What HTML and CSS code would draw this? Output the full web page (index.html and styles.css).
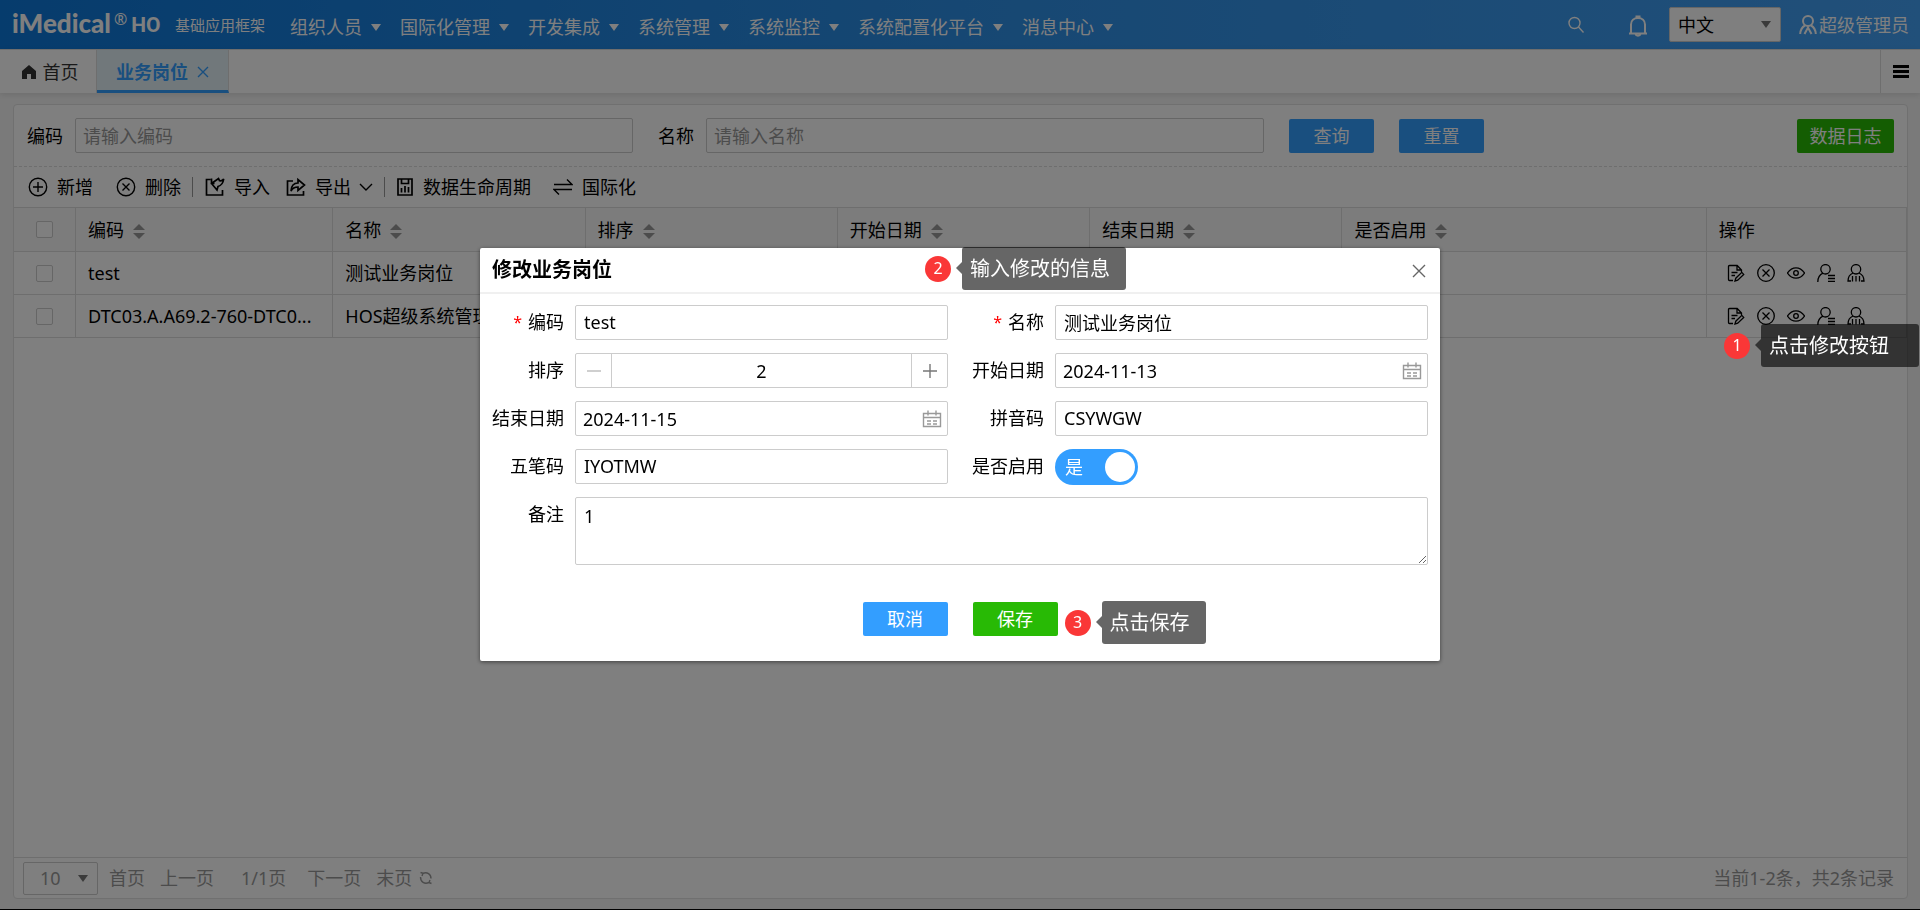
FILE: index.html
```html
<!DOCTYPE html>
<html lang="zh-CN">
<head>
<meta charset="utf-8">
<title>业务岗位</title>
<link rel="stylesheet" href="styles.css">
</head>
<body>
<svg class="sprite" aria-hidden="true">
  <symbol id="i-edit" viewBox="0 0 18 18"><path d="M6 16.500H2.500a1 1 0 0 1-1-1v-13a1 1 0 0 1 1-1h7.700L14.500 6v2M10 1.500V6h4.500M4.500 8.500h6M4.500 11.500h3.500M8 17l.8-2.800 6-5.800 1.900 2-6 5.700z"/></symbol>
  <symbol id="i-del" viewBox="0 0 18 18"><circle cx="9" cy="9" r="8.300"/><path d="M5.500 5.500l7 7M12.500 5.500l-7 7"/></symbol>
  <symbol id="i-eye" viewBox="0 0 18 18"><path d="M.5 9C3 5.300 5.800 3.800 9 3.800s6 1.500 8.500 5.200C15 12.700 12.200 14.200 9 14.200S3 12.700.5 9z"/><circle cx="9" cy="9" r="2.300"/></symbol>
  <symbol id="i-userlist" viewBox="0 0 18 18"><circle cx="8.500" cy="5.300" r="4.700"/><path d="M.8 18c0-4.800 2-7.500 5.200-8.900M11 11.500h7.500M11 14.500h7.500M11 17.500h7.500"/></symbol>
  <symbol id="i-usergroup" viewBox="0 0 18 18"><circle cx="9" cy="5.300" r="4.700"/><path d="M6 9C2.500 10.500 1 13 1 17h3M12 9c3.500 1.500 5 4 5 8h-3M5.500 12v5.500M9 12v5.500M12.500 12v5.500"/></symbol>
  <symbol id="i-calendar" viewBox="0 0 20 18"><path d="M1.500 3.500h17v13h-17zM1.500 7.500h17M6 .5v5M14 .5v5M5 11h4M11 11h4M5 14h4M11 14h4"/></symbol>
</svg>

<div class="page">
  <header class="topbar">
    <div class="logo"><b class="logo-name">iMedical</b><span class="logo-reg">®</span><b class="logo-ho">HO</b></div>
    <span class="product">基础应用框架</span>
    <nav class="menu">
      <a href="#">组织人员<i class="caret"></i></a>
      <a href="#">国际化管理<i class="caret"></i></a>
      <a href="#">开发集成<i class="caret"></i></a>
      <a href="#">系统管理<i class="caret"></i></a>
      <a href="#">系统监控<i class="caret"></i></a>
      <a href="#">系统配置化平台<i class="caret"></i></a>
      <a href="#">消息中心<i class="caret"></i></a>
    </nav>
    <div class="tools">
      <button class="plain" aria-label="搜索"><svg class="ico" width="18" height="18" viewBox="0 0 18 18"><circle cx="7.500" cy="7" r="5.500"/><path d="M11.500 11l5 5.500"/></svg></button>
      <button class="plain bell" aria-label="通知"><svg class="ico thick" width="20" height="22" viewBox="0 0 20 22"><path d="M1 18.500h18M3 18V9.500C3 5.500 6 3 10 3s7 2.500 7 6.500V18M8.500 3V1.500h3V3M7.500 19c.5 2.200 4.500 2.200 5 0"/></svg></button>
      <div class="select-box lang"><select aria-label="语言"><option>中文</option></select></div>
      <a class="user" href="#"><svg class="ico thick" width="18" height="20" viewBox="0 0 18 20"><circle cx="9" cy="6" r="5"/><path d="M6 10.500C3 12 1.500 15 1.200 19M12 10.500c3 1.500 4.500 4.500 4.800 8.500M5.500 19L9 12.500l3.500 6.500"/></svg>超级管理员</a>
    </div>
  </header>

  <div class="tabs">
    <button class="tab home"><svg width="14" height="14" viewBox="0 0 14 14"><path fill="currentColor" d="M7 0l7 6v8H9V9H5v5H0V6z"/></svg>首页</button>
    <button class="tab active">业务岗位<svg class="ico" width="12" height="12" viewBox="0 0 12 12"><path d="M1 1l10 10M11 1L1 11"/></svg></button>
    <button class="tab-menu" aria-label="标签菜单"><i></i><i></i><i></i></button>
  </div>

  <main class="panel">
    <form class="search">
      <label for="q-code">编码</label><input class="field" id="q-code" placeholder="请输入编码">
      <label for="q-name">名称</label><input class="field" id="q-name" placeholder="请输入名称">
      <button type="button" class="btn blue">查询</button>
      <button type="button" class="btn blue">重置</button>
      <button type="button" class="btn green log">数据日志</button>
    </form>

    <div class="toolbar">
      <button class="tool"><svg class="ico" width="20" height="20" viewBox="0 0 20 20"><circle cx="10" cy="10" r="8.700"/><path d="M10 5v10M5 10h10"/></svg>新增</button>
      <button class="tool"><svg class="ico" width="20" height="20" viewBox="0 0 20 20"><circle cx="10" cy="10" r="8.700"/><path d="M6.500 6.500l7 7M13.500 6.500l-7 7"/></svg>删除</button>
      <span class="bar"></span>
      <button class="tool"><svg class="ico import" width="20" height="20" viewBox="0 0 20 20"><path d="M5.500 2.500H1.500v15.500h16v-5M18.700 2c-1 1.500-2.700 2-4.200 1.700L13.500 1.500 6.500 6.500l5.500 6.500 1-3.500c3.500-1 5.200-4 5.700-7.500zM6.500 1.500v5h3"/></svg>导入</button>
      <button class="tool"><svg class="ico import" width="20" height="20" viewBox="0 0 20 20"><path d="M7 4H1.500v14h16v-4M5 14c.3-5 2.500-8 7-8V2.500l6.500 5.500-6.500 5.500V10c-3.500 0-5.500 1-7 4z"/></svg>导出<svg class="ico chev" width="14" height="8" viewBox="0 0 14 8"><path d="M1 1l6 6 6-6"/></svg></button>
      <span class="bar"></span>
      <button class="tool"><svg class="ico import" width="16" height="18" viewBox="0 0 16 18"><path d="M1 1h14v16H1zM4.500 1v4.500h7V1M4.500 14.500V10M8 14.500V8M11.500 14.500V9"/></svg>数据生命周期</button>
      <button class="tool wide"><svg class="ico" width="20" height="20" viewBox="0 0 20 20"><path d="M1 7.500h18l-5-5M19 12.500H1l5 5"/></svg>国际化</button>
    </div>

    <table class="grid">
      <colgroup><col class="c-check"><col class="c-code"><col class="c-std"><col class="c-std"><col class="c-std"><col class="c-std"><col class="c-flag"><col class="c-act"></colgroup>
      <thead>
        <tr><th><input type="checkbox" aria-label="全选"></th><th>编码<i class="sort"></i></th><th>名称<i class="sort"></i></th><th>排序<i class="sort"></i></th><th>开始日期<i class="sort"></i></th><th>结束日期<i class="sort"></i></th><th>是否启用<i class="sort"></i></th><th>操作</th></tr>
      </thead>
      <tbody>
        <tr><td><input type="checkbox" aria-label="选择 test"></td><td>test</td><td>测试业务岗位</td><td></td><td></td><td></td><td></td>
          <td><div class="acts">
            <button aria-label="修改"><svg class="ico"><use href="#i-edit"/></svg></button><button aria-label="删除"><svg class="ico"><use href="#i-del"/></svg></button><button aria-label="查看"><svg class="ico"><use href="#i-eye"/></svg></button><button aria-label="用户列表"><svg class="ico"><use href="#i-userlist"/></svg></button><button aria-label="用户组"><svg class="ico"><use href="#i-usergroup"/></svg></button>
          </div></td></tr>
        <tr><td><input type="checkbox" aria-label="选择 DTC03"></td><td>DTC03.A.A69.2-760-DTC0...</td><td>HOS超级系统管理</td><td></td><td></td><td></td><td></td>
          <td><div class="acts">
            <button aria-label="修改"><svg class="ico"><use href="#i-edit"/></svg></button><button aria-label="删除"><svg class="ico"><use href="#i-del"/></svg></button><button aria-label="查看"><svg class="ico"><use href="#i-eye"/></svg></button><button aria-label="用户列表"><svg class="ico"><use href="#i-userlist"/></svg></button><button aria-label="用户组"><svg class="ico"><use href="#i-usergroup"/></svg></button>
          </div></td></tr>
      </tbody>
    </table>

    <footer class="pager">
      <div class="select-box size"><select aria-label="每页条数"><option>10</option></select></div>
      <a href="#">首页</a><a href="#">上一页</a><span class="count">1/1页</span><a href="#">下一页</a><a href="#" class="last">末页</a>
      <button class="plain refresh" aria-label="刷新"><svg class="ico" width="14" height="14" viewBox="0 0 14 14"><path d="M4 2.300C8 .5 12 3 12 7.500M1.500 6C1.500 11 5.500 13.500 10 11.500M1.500 1.500L4 2.300 3 5M12.500 12.500L10 11.500l1-2.500"/></svg></button>
      <span class="total">当前1-2条，共2条记录</span>
    </footer>
  </main>
</div>

<div class="overlay">
  <section class="dialog" role="dialog" aria-labelledby="dlg-title">
    <header class="dialog-head">
      <h2 id="dlg-title">修改业务岗位</h2>
      <button class="plain close" aria-label="关闭"><svg class="ico" width="14" height="14" viewBox="0 0 14 14"><path d="M1 1l12 12M13 1L1 13"/></svg></button>
      <div class="step step-info"><span class="num">2</span><span class="tip">输入修改的信息</span></div>
    </header>
    <form class="form">
      <div class="item"><label for="f-code"><em>*</em>编码</label><input class="field" id="f-code" value="test"></div>
      <div class="item"><label for="f-name"><em>*</em>名称</label><input class="field" id="f-name" value="测试业务岗位"></div>
      <div class="item"><label for="f-sort">排序</label>
        <div class="field spinner"><button type="button" aria-label="减少"><svg class="ico" width="14" height="14" viewBox="0 0 14 14"><path d="M0 7h14"/></svg></button><input id="f-sort" value="2"><button type="button" class="plus" aria-label="增加"><svg class="ico" width="14" height="14" viewBox="0 0 14 14"><path d="M0 7h14M7 0v14"/></svg></button></div></div>
      <div class="item"><label for="f-start">开始日期</label><div class="field date"><input id="f-start" value="2024-11-13"><svg class="ico" width="20" height="18"><use href="#i-calendar"/></svg></div></div>
      <div class="item"><label for="f-end">结束日期</label><div class="field date"><input id="f-end" value="2024-11-15"><svg class="ico" width="20" height="18"><use href="#i-calendar"/></svg></div></div>
      <div class="item"><label for="f-py">拼音码</label><input class="field" id="f-py" value="CSYWGW"></div>
      <div class="item"><label for="f-wb">五笔码</label><input class="field" id="f-wb" value="IYOTMW"></div>
      <div class="item"><label for="f-on">是否启用</label><div class="switch"><input type="checkbox" id="f-on" checked><span>是</span></div></div>
      <div class="item full"><label for="f-note">备注</label><textarea class="field" id="f-note">1</textarea></div>
    </form>
    <footer class="dialog-foot">
      <button class="btn blue">取消</button>
      <div class="save"><button class="btn green">保存</button>
        <div class="step step-save"><span class="num">3</span><span class="tip">点击保存</span></div></div>
    </footer>
  </section>
  <div class="step step-edit"><span class="num">1</span><span class="tip">点击修改按钮</span></div>
</div>
</body>
</html>
```
FILE: styles.css
```css
* { box-sizing: border-box; }
body {
  margin: 0;
  color: #000;
  font: 18px/24px "Noto Sans", "Noto Sans CJK SC", sans-serif;
}
button, input, select, textarea { font: inherit; color: inherit; margin: 0; }
button { padding: 0; border: 0; background: none; }
a { color: inherit; text-decoration: none; }
.sprite { display: none; }
.ico { fill: none; stroke: currentColor; stroke-width: 1.4; flex: none; }
.ico.import { stroke-width: 1.7; }
.ico.thick { stroke-width: 2; }
.plain { display: flex; }

.page {
  display: flex;
  flex-direction: column;
  min-height: 100vh;
  background: #f5f5f5;
  border-bottom: 1px solid #000;
}

/* top bar */
.topbar {
  display: flex;
  align-items: center;
  height: 49px;
  padding: 0 11px 0 12px;
  color: #fff;
  background: linear-gradient(90deg, #0d78da 0%, #2d8fe6 50%, #43a0f4 100%);
}
.logo { display: flex; align-items: center; width: 163px; height: 32px; margin-top: -4px; }
.logo-name { font: 900 26px/32px Lato, sans-serif; }
.logo-reg { margin: -8px 4px 0 3px; font-size: 16px; }
.logo-ho { padding-top: 5px; font: 700 21px/28px Roboto, sans-serif; }
.product { font-size: 15px; }
.menu { display: flex; padding: 5px 0 0 25px; }
.menu a { display: flex; align-items: center; margin-right: 19px; white-space: nowrap; }
.caret { margin-left: 9px; border: 5px solid transparent; border-top: 7px solid; border-bottom: 0; }
.tools { display: flex; align-items: center; margin-left: auto; }
.bell { margin: 3px 21px 0 43px; }
.select-box { position: relative; border: 1px solid #ccc; border-radius: 2px; background: #fff; }
.select-box::after {
  content: "";
  position: absolute;
  top: 13px;
  right: 9px;
  border: 5px solid transparent;
  border-top: 7px solid #777;
  border-bottom: 0;
  pointer-events: none;
}
.select-box select { width: 100%; height: 100%; padding: 0 8px; border: 0; background: none; appearance: none; }
.lang { width: 112px; height: 35px; color: #000; }
.user { display: flex; align-items: center; gap: 2px; margin-left: 18px; }

/* tabs */
.tabs {
  display: flex;
  height: 44px;
  background: #fff;
  border-top: 1px solid #ddd;
  box-shadow: 0 2px 6px rgba(0, 0, 0, .1);
}
.tab { display: flex; align-items: center; justify-content: center; }
.home { gap: 7px; width: 97px; padding-left: 4px; color: #333; border-right: 1px solid #ddd; }
.tab.active {
  gap: 9px;
  width: 132px;
  padding-top: 3px;
  color: #339eff;
  font-weight: 700;
  background: #e3f1f6;
  border-right: 1px solid #ddd;
  border-bottom: 3px solid #339eff;
}
.tab-menu {
  display: flex;
  flex-direction: column;
  align-items: center;
  justify-content: center;
  gap: 2px;
  width: 40px;
  margin-left: auto;
  border-left: 1px solid #ddd;
}
.tab-menu i { width: 16px; height: 3px; background: #000; }

/* panel */
.panel {
  display: flex;
  flex: 1;
  flex-direction: column;
  margin: 11px 12px 10px 13px;
  background: #fff;
  border: 1px solid #e0e0e0;
  border-radius: 4px;
}
.search {
  display: flex;
  align-items: center;
  height: 62px;
  padding: 0 13px;
  border-bottom: 1px dashed #ddd;
}
.search label { margin-right: 12px; white-space: nowrap; }
.field {
  height: 35px;
  padding: 0 8px;
  background: #fff;
  border: 1px solid #ccc;
  border-radius: 2px;
  outline: 0;
}
.search .field { flex: 0 1 558px; min-width: 0; margin-right: 25px; padding: 0 7px; }
.field::placeholder { color: #999; opacity: 1; }
.btn { flex: none; width: 85px; height: 34px; color: #fff; border-radius: 2px; }
.blue { background: #339eff; }
.green { background: #28ba05; }
.search .btn + .btn { margin-left: 25px; }
.search .btn + .log { width: 97px; margin-left: auto; }

.toolbar { display: flex; align-items: center; height: 40px; padding-left: 14px; }
.tool { display: flex; align-items: center; gap: 9px; margin-right: 23px; white-space: nowrap; }
.tool:has(+ .bar) { margin-right: 11px; }
.tool .chev { margin-left: -1px; }
.bar + .tool { margin-right: 16px; }
.bar { width: 1px; height: 20px; margin-right: 12px; background: #999; }
.bar + .tool:has(+ .wide) { margin-right: 22px; gap: 10px; }

/* grid */
.grid { width: 100%; table-layout: fixed; border-collapse: separate; border-spacing: 0; border-top: 1px solid #ddd; }
.c-check { width: 62px; }
.c-code { width: 257px; }
.c-std { width: 252px; }
.c-flag { width: 364px; }
.c-act { width: 200px; }
.grid th, .grid td {
  height: 43px;
  padding: 0 12px;
  text-align: left;
  font-weight: 400;
  white-space: nowrap;
  overflow: hidden;
  border: 0 solid #ddd;
  border-width: 0 1px 1px 0;
}
.grid th { height: 44px; background: #f9f9f9; }
.grid th:first-child, .grid td:first-child { padding: 0 0 0 22px; }
.grid input {
  display: block;
  width: 17px;
  height: 17px;
  background: #fff;
  border: 1px solid #ccc;
  border-radius: 2px;
  appearance: none;
}
.sort { display: inline-flex; flex-direction: column; gap: 3px; margin-left: 9px; vertical-align: middle; }
.sort::before, .sort::after { content: ""; border: 6px solid transparent; }
.sort::before { border-top: 0; border-bottom-color: #999; }
.sort::after { border-bottom: 0; border-top-color: #999; }
.acts { display: flex; gap: 12px; padding-left: 8px; }
.acts button, .acts svg { display: block; width: 18px; height: 18px; overflow: visible; }
.acts svg { stroke-width: 1.3; }

.pager {
  display: flex;
  align-items: center;
  gap: 15px;
  height: 41px;
  margin-top: auto;
  padding: 0 13px 0 9px;
  color: #999;
  border-top: 1px solid #ddd;
}
.size { width: 75px; height: 33px; margin-right: -4px; }
.size select { padding: 0 16px; }
.size::after { top: 12px; }
.count { margin: 0 6px 0 12px; }
.last { margin-right: -8px; }
.total { margin-left: auto; }

/* dialog */
.overlay {
  position: fixed;
  inset: 0;
  background: rgba(0, 0, 0, .5);
}
.dialog {
  width: 50%;
  min-width: 900px;
  margin: 248px auto 0;
  background: #fff;
  border-radius: 2px;
  box-shadow: 0 1px 4px rgba(0, 0, 0, .5);
}
.dialog-head {
  position: relative;
  display: flex;
  align-items: center;
  justify-content: space-between;
  height: 46px;
  padding: 0 14px 0 12px;
  border-bottom: 2px solid #f0f0f0;
}
.dialog-head h2 { margin: 0; font-size: 20px; line-height: 28px; }
.close { padding-top: 2px; color: #666; }
.form {
  display: grid;
  grid-template-columns: 1fr 1fr;
  gap: 13px 24px;
  padding: 11px 12px 0;
}
.item { display: grid; grid-template-columns: 72px 1fr; gap: 11px; align-items: start; }
.item.full { grid-column: 1 / -1; }
.item label { display: flex; align-items: center; justify-content: flex-end; height: 34px; white-space: nowrap; }
.item em { margin-right: 6px; color: #f00; font-style: normal; font-size: 16px; }
.item .field { width: 100%; padding-bottom: 2px; }
.item textarea { display: block; height: 68px; padding-top: 6px; resize: vertical; }
.spinner, .date { display: flex; align-items: center; }
.item .spinner { padding: 0; }
.spinner input, .date input { flex: 1; min-width: 0; height: 100%; padding: 0; border: 0; outline: 0; background: none; }
.spinner input { text-align: center; }
.item .date { padding: 0 5px 0 7px; }
.date svg { color: #999; }
.spinner button {
  display: flex;
  align-items: center;
  justify-content: center;
  width: 36px;
  height: 100%;
  color: #bbb;
  border-right: 1px solid #ccc;
}
.spinner .plus { color: #777; border-right: 0; border-left: 1px solid #ccc; }
.switch { position: relative; width: 83px; height: 35px; color: #fff; line-height: 36px; }
.switch input { display: block; width: 83px; height: 36px; border-radius: 18px; background: #339eff; appearance: none; }
.switch input::before {
  content: "";
  position: absolute;
  top: 3px;
  right: 3px;
  width: 30px;
  height: 30px;
  border-radius: 50%;
  background: #fff;
}
.switch span { position: absolute; top: 0; left: 10px; }
.dialog-foot { display: flex; justify-content: center; gap: 25px; padding: 37px 0 25px; }
.save { position: relative; display: flex; }

/* guide steps */
.step { position: absolute; display: flex; align-items: center; gap: 11px; color: #fff; white-space: nowrap; }
.num { width: 26px; height: 26px; border-radius: 50%; background: #fa3737; font-size: 16px; line-height: 24px; text-align: center; }
.tip { position: relative; padding: 0 16px 0 8px; border-radius: 3px; background: rgba(0, 0, 0, .6); font-size: 20px; line-height: 43px; }
.tip::before {
  content: "";
  position: absolute;
  top: 15px;
  right: 100%;
  border: 6px solid transparent;
  border-right-color: rgba(0, 0, 0, .6);
  border-left: 0;
}
.step-info { top: -1px; left: calc(50% - 35px); }
.step-save { top: -1px; left: calc(100% + 7px); }
.step-edit { top: 324px; right: 1px; }
.step-edit .tip { padding-right: 30px; }
```
